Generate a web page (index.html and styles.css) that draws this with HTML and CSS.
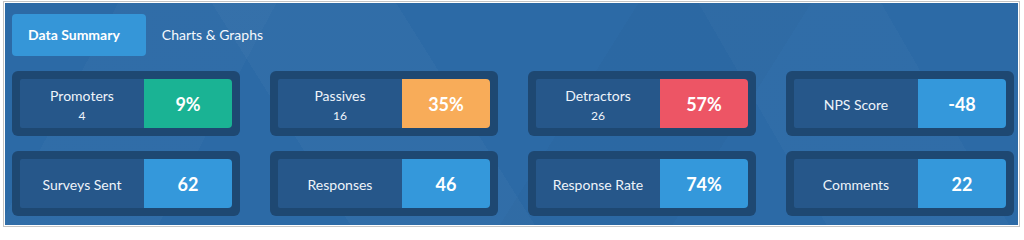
FILE: index.html
```html
<!DOCTYPE html>
<html>
<head>
<meta charset="utf-8">
<link rel="stylesheet" href="styles.css">
</head>
<body>
<div class="frame">
  <div class="panel">
    <div class="tabs">
      <div class="tab active">Data Summary</div>
      <div class="tab">Charts &amp; Graphs</div>
    </div>
    <div class="grid">
      <div class="card"><div class="label"><div class="name">Promoters</div><div class="count">4</div></div><div class="value green">9%</div></div>
      <div class="card"><div class="label"><div class="name">Passives</div><div class="count">16</div></div><div class="value orange">35%</div></div>
      <div class="card"><div class="label"><div class="name">Detractors</div><div class="count">26</div></div><div class="value red">57%</div></div>
      <div class="card"><div class="label single"><div class="name">NPS Score</div></div><div class="value blue">-48</div></div>
      <div class="card"><div class="label single"><div class="name">Surveys Sent</div></div><div class="value blue">62</div></div>
      <div class="card"><div class="label single"><div class="name">Responses</div></div><div class="value blue">46</div></div>
      <div class="card"><div class="label single"><div class="name">Response Rate</div></div><div class="value blue">74%</div></div>
      <div class="card"><div class="label single"><div class="name">Comments</div></div><div class="value blue">22</div></div>
    </div>
  </div>
</div>
</body>
</html>
```
FILE: styles.css
```css
html, body {
  margin: 0;
  padding: 0;
  background: #ffffff;
}
body {
  font-family: Lato, "Liberation Sans", sans-serif;
  color: #ffffff;
}
.frame {
  margin: 1px 0 0 3px;
  width: 1017px;
  border: 1px solid #c4c4c4;
  padding: 1px;
  box-sizing: border-box;
  height: 226px;
}
.panel {
  height: 100%;
  box-sizing: border-box;
  padding: 11px 0 0 7px;
  background-color: #2c6aa6;
  background-image:
    linear-gradient(118deg, rgba(255,255,255,0) 0%, rgba(255,255,255,0) 10%, rgba(255,255,255,0.02) 10%, rgba(255,255,255,0.02) 24%, rgba(255,255,255,0) 24%),
    linear-gradient(58deg, rgba(255,255,255,0) 30%, rgba(255,255,255,0.025) 30%, rgba(255,255,255,0.025) 46%, rgba(255,255,255,0) 46%),
    linear-gradient(122deg, rgba(0,0,0,0) 55%, rgba(0,0,0,0.02) 55%, rgba(0,0,0,0.02) 70%, rgba(0,0,0,0) 70%),
    linear-gradient(60deg, rgba(255,255,255,0) 72%, rgba(255,255,255,0.02) 72%, rgba(255,255,255,0.02) 88%, rgba(255,255,255,0) 88%);
}
.tabs {
  display: flex;
  height: 42px;
}
.tab {
  padding: 0 16px;
  font-size: 14px;
  line-height: 42px;
  border-radius: 4px;
  color: #f4f8fc;
}
.tab.active {
  background: #3596d8;
  font-weight: 700;
  color: #ffffff;
  padding: 0 26px 0 16px;
}
.grid {
  margin-top: 15px;
  display: grid;
  grid-template-columns: repeat(4, 228px);
  column-gap: 30px;
  row-gap: 15px;
}
.card {
  height: 65px;
  box-sizing: border-box;
  padding: 8px;
  background: #1e4872;
  border-radius: 6px;
  display: flex;
}
.label {
  width: 124px;
  background: #26578a;
  border-radius: 2px 0 0 2px;
  display: flex;
  flex-direction: column;
  align-items: center;
  justify-content: center;
  padding-top: 4px;
  box-sizing: border-box;
  color: #eef4fa;
}
.label.single {
  padding-top: 2px;
}
.name {
  font-size: 14px;
  line-height: 20px;
}
.count {
  font-size: 12px;
  line-height: 19px;
}
.value {
  flex: 1;
  display: flex;
  align-items: center;
  justify-content: center;
  font-size: 18px;
  font-weight: 700;
  border-radius: 0 4px 4px 0;
}
.green { background: #1ab394; }
.orange { background: #f8ac59; }
.red { background: #ed5565; }
.blue { background: #3498db; }
```
